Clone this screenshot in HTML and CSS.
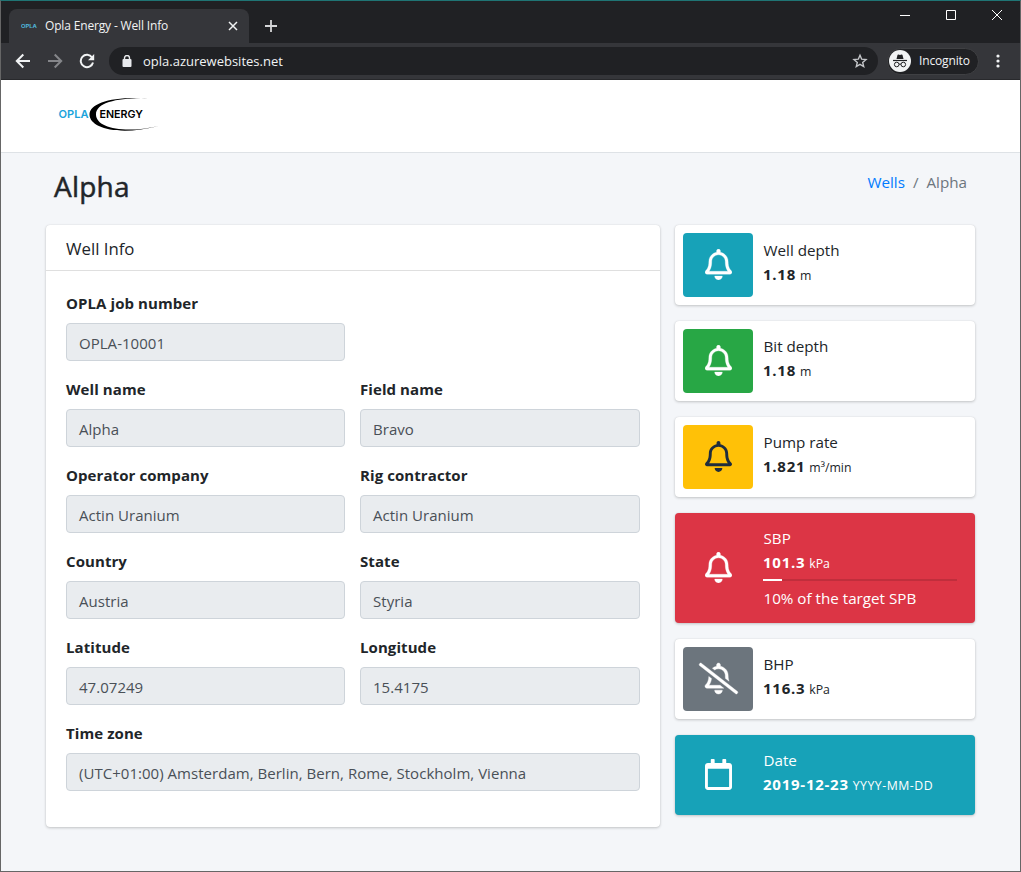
FILE: index.html
```
<!DOCTYPE html>
<html lang="en">
<head>
<meta charset="utf-8">
<title>Opla Energy - Well Info</title>
<link rel="stylesheet" href="styles.css">
</head>
<body>
<svg class="defs" aria-hidden="true">
  <symbol id="bell" viewBox="0 0 448 512"><path d="M439.39 362.29c-19.32-20.76-55.47-51.99-55.47-154.29 0-77.7-54.48-139.9-127.94-155.16V32c0-17.67-14.32-32-31.98-32s-31.98 14.33-31.98 32v20.84C118.56 68.1 64.08 130.3 64.08 208c0 102.3-36.15 133.53-55.47 154.29-6 6.45-8.66 14.16-8.61 21.71.11 16.4 12.98 32 32.1 32h383.8c19.12 0 32-15.6 32.1-32 .05-7.55-2.61-15.27-8.61-21.71zM67.53 368c21.22-27.97 44.42-74.33 44.53-159.42 0-.2-.06-.38-.06-.58 0-61.86 50.14-112 112-112s112 50.14 112 112c0 .2-.06.38-.06.58.11 85.1 23.31 131.46 44.53 159.42H67.53zM224 512c35.32 0 63.97-28.65 63.97-64H160.03c0 35.35 28.65 64 63.97 64z"/></symbol>
</svg>
<div class="window">
  <div class="tabstrip">
    <div class="tab">
      <svg class="favicon" width="17" height="6"><text x="0" y="5" textLength="16" lengthAdjust="spacingAndGlyphs">OPLA</text></svg>
      <span class="tab-title">Opla Energy - Well Info</span>
      <svg class="tab-close" width="10" height="10" viewBox="0 0 10 10"><path d="M1 1l8 8M9 1l-8 8"/></svg>
    </div>
    <svg class="new-tab" width="12" height="12" viewBox="0 0 12 12"><path d="M6 0v12M0 6h12"/></svg>
    <div class="caption">
      <svg width="10" height="10"><path d="M0 5.5h10"/></svg>
      <svg width="10" height="10"><path d="M.5 .5h9v9h-9z"/></svg>
      <svg width="10" height="10"><path d="M0 0l10 10M10 0L0 10"/></svg>
    </div>
  </div>
  <div class="toolbar">
    <svg class="nav" width="16" height="16" viewBox="0 0 16 16"><path d="M15 8H2.5M8.300 1.500L1.800 8l6.500 6.500"/></svg>
    <svg class="nav dim" width="16" height="16" viewBox="0 0 16 16"><path d="M1 8h12.500M7.700 1.500L14.200 8l-6.500 6.500"/></svg>
    <svg class="nav" width="16" height="16" viewBox="0 0 16 16"><path d="M13.100 4.500A6.200 6.200 0 1 0 14 9.500"/><path class="solid" d="M15.200 1v6.200H9z"/></svg>
    <div class="omnibox">
      <svg class="lock" width="10" height="13" viewBox="0 0 10 13"><rect x="0.500" y="4" width="9" height="8" rx="1"/><path d="M2.500 5V3a2.500 2.500 0 0 1 5 0v2"/></svg>
      <span class="url">opla.azurewebsites.net</span>
      <svg class="star" width="16" height="16" viewBox="0 0 16 16"><path d="M8 2.200l1.700 4 4.300.400-3.300 2.800 1 4.200L8 11.400l-3.700 2.200 1-4.200L2 6.600l4.300-.4z"/></svg>
    </div>
    <div class="incognito">
      <svg width="22" height="22" viewBox="0 0 22 22"><circle cx="11" cy="11" r="11" fill="#f1f3f4"/><path d="M7.500 9l1-4q.2-.7.900-.5L11 5l1.600-.5q.7-.2.900.5l1 4z" fill="#202124"/><path d="M4 10.500h14" stroke="#202124" stroke-width="1.200"/><g fill="none" stroke="#202124" stroke-width="1"><circle cx="7.700" cy="14.500" r="2.300"/><circle cx="14.300" cy="14.500" r="2.300"/><path d="M10 14.300q1-.7 2 0"/></g></svg>
      <span>Incognito</span>
    </div>
    <svg class="dots" width="4" height="14"><circle cx="2" cy="2" r="1.600"/><circle cx="2" cy="7" r="1.600"/><circle cx="2" cy="12" r="1.600"/></svg>
  </div>
  <header class="navbar">
    <svg class="logo" width="104" height="36" viewBox="0 0 104 36">
      <path d="M90 1.500C55-1 31.500 6 31.500 17.500C31.500 31 60 39.500 101 29C66 37 38 31 38 17.500C38 5 62 .500 90 1.500z"/>
      <text class="logo-opla" x="0.500" y="21.300" textLength="30" lengthAdjust="spacingAndGlyphs">OPLA</text>
      <text class="logo-energy" x="41.500" y="21.300" textLength="43.500" lengthAdjust="spacingAndGlyphs">ENERGY</text>
    </svg>
  </header>
  <div class="page-head">
    <h1>Alpha</h1>
    <nav class="crumbs"><a>Wells</a><i>/</i><span>Alpha</span></nav>
  </div>
  <main class="content">
    <section class="card">
      <h2>Well Info</h2>
      <div class="form">
        <div class="field first"><label>OPLA job number</label><div class="input">OPLA-10001</div></div>
        <div class="field"><label>Well name</label><div class="input">Alpha</div></div>
        <div class="field"><label>Field name</label><div class="input">Bravo</div></div>
        <div class="field"><label>Operator company</label><div class="input">Actin Uranium</div></div>
        <div class="field"><label>Rig contractor</label><div class="input">Actin Uranium</div></div>
        <div class="field"><label>Country</label><div class="input">Austria</div></div>
        <div class="field"><label>State</label><div class="input">Styria</div></div>
        <div class="field"><label>Latitude</label><div class="input">47.07249</div></div>
        <div class="field"><label>Longitude</label><div class="input">15.4175</div></div>
        <div class="field wide"><label>Time zone</label><div class="input">(UTC+01:00) Amsterdam, Berlin, Bern, Rome, Stockholm, Vienna</div></div>
      </div>
    </section>
    <aside class="boxes">
      <div class="box"><div class="icon teal"><svg class="bell"><use href="#bell"/></svg></div><div class="info"><span>Well depth</span><div><b>1.18</b> <small>m</small></div></div></div>
      <div class="box"><div class="icon green"><svg class="bell"><use href="#bell"/></svg></div><div class="info"><span>Bit depth</span><div><b>1.18</b> <small>m</small></div></div></div>
      <div class="box"><div class="icon yellow"><svg class="bell"><use href="#bell"/></svg></div><div class="info"><span>Pump rate</span><div><b>1.821</b> <small>m³/min</small></div></div></div>
      <div class="box tall red"><div class="icon"><svg class="bell"><use href="#bell"/></svg></div><div class="info"><span>SBP</span><div><b>101.3</b> <small>kPa</small></div><div class="progress"><div class="bar" style="width:10%"></div></div><span>10% of the target SPB</span></div></div>
      <div class="box"><div class="icon gray"><svg class="slash" viewBox="0 0 640 512"><path d="M633.99 471.02L36 3.51C29.1-2.01 19.03-.9 13.51 6l-10 12.49C-2.02 25.39-.9 35.46 6 40.98l598 467.51c6.9 5.52 16.96 4.400 22.49-2.490l10-12.490c5.520-6.900 4.410-16.970-2.500-22.490zM163.530 368c16.710-22.030 34.480-55.800 41.400-110.580l-45.470-35.550c-3.270 90.730-36.470 120.680-54.840 140.420-6 6.450-8.660 14.160-8.610 21.710.11 16.400 12.980 32 32.100 32h279.660l-61.400-48H163.530zM320 96c61.860 0 112 50.140 112 112 0 .2-.06.38-.06.58.02 16.840 1.160 31.770 2.790 45.730l59.530 46.540c-8.310-22.130-14.340-51.490-14.340-92.850 0-77.700-54.480-139.900-127.940-155.160V32c0-17.670-14.320-32-31.980-32s-31.980 14.330-31.980 32v20.840c-26.020 5.410-49.450 16.940-69.130 32.720l38.170 29.840C275 103.180 296.650 96 320 96zm0 416c35.320 0 63.970-28.650 63.970-64H256.030c0 35.350 28.650 64 63.970 64z"/></svg></div><div class="info"><span>BHP</span><div><b>116.3</b> <small>kPa</small></div></div></div>
      <div class="box date"><div class="icon"><svg class="calendar" viewBox="0 0 448 512"><path d="M400 64h-48V12c0-6.600-5.400-12-12-12h-40c-6.600 0-12 5.400-12 12v52H160V12c0-6.600-5.400-12-12-12h-40c-6.600 0-12 5.400-12 12v52H48C21.500 64 0 85.500 0 112v352c0 26.500 21.500 48 48 48h352c26.500 0 48-21.500 48-48V112c0-26.500-21.500-48-48-48zm-6 400H54c-3.300 0-6-2.700-6-6V160h352v298c0 3.300-2.700 6-6 6z"/></svg></div><div class="info"><span>Date</span><div><b>2019-12-23</b> <small class="fmt">YYYY-MM-DD</small></div></div></div>
    </aside>
  </main>
</div>
</body>
</html>
```
FILE: styles.css
```
* { box-sizing: border-box; }
body { margin: 0; font: 15px/24px "Open Sans", "Noto Sans", sans-serif; color: #212529; }
.defs { position: absolute; width: 0; height: 0; }
svg { display: block; flex: none; }
.window { width: 1021px; height: 872px; overflow: hidden; background: #f4f6f9; border: 1px solid #666; border-top-color: #1f7474; }

.tabstrip { display: flex; height: 42px; padding: 8px 0 0 8px; background: #202124; }
.tab { display: flex; align-items: center; width: 240px; height: 34px; padding: 0 11px 0 12px; background: #35363a; border-radius: 8px 8px 0 0; color: #f1f3f4; font-size: 12px; }
.favicon { margin-right: 7px; }
.favicon text { font: 700 5px Inter, sans-serif; fill: #4fb5d8; }
.tab-title { flex: 1; white-space: nowrap; letter-spacing: -.16px; }
.tab-close path { stroke: #f1f3f4; stroke-width: 1.5; }
.new-tab { margin: 11px 0 0 16px; }
.new-tab path { stroke: #d5d6d8; stroke-width: 1.8; }
.caption { display: flex; gap: 36px; margin: 1px 18px 0 auto; }
.caption path { fill: none; stroke: #fff; stroke-width: 1; }

.toolbar { display: flex; align-items: center; height: 37px; background: #35363a; border-bottom: 1px solid #28292c; padding-left: 14px; }
.nav { margin-right: 16px; fill: none; stroke: #f1f3f4; stroke-width: 2; }
.nav.dim { stroke: #85868a; }
.nav .solid { fill: #f1f3f4; stroke: none; }
.omnibox { display: flex; align-items: center; width: 769px; height: 28px; margin-left: -2px; padding: 0 10px 0 13px; border-radius: 14px; background: #202124; color: #f1f3f4; }
.lock { fill: #e8eaed; }
.lock path { fill: none; stroke: #e8eaed; stroke-width: 1.4; }
.url { flex: 1; margin-left: 11px; font-size: 13px; }
.star { fill: none; stroke: #c4c6c9; stroke-width: 1.4; }
.incognito { display: flex; align-items: center; gap: 8px; width: 92px; height: 27px; margin-left: 9px; padding-left: 1px; border: 1px solid #3f4043; border-radius: 14px; background: #202124; color: #f1f3f4; font-size: 12px; letter-spacing: -.15px; }
.dots { margin-left: 17px; fill: #f1f3f4; }

.navbar { height: 73px; padding: 17px 0 0 57px; background: #fff; border-bottom: 1px solid #dee2e6; }
.logo-opla { font: 600 11px Inter, sans-serif; fill: #1ba4dc; }
.logo-energy { font: 600 11px Inter, sans-serif; fill: #000; }

.page-head { display: flex; justify-content: space-between; height: 72px; padding: 17px 53px 0 53px; }
h1 { margin: 0; font-size: 28px; line-height: 33px; font-weight: 500; letter-spacing: .2px; -webkit-text-stroke: .5px #212529; }
.crumbs { display: flex; gap: 8px; color: #6c757d; font-size: 15.2px; }
.crumbs a { color: #007bff; }
.crumbs i { font-style: normal; }

.content { display: flex; gap: 15px; padding-left: 45px; align-items: flex-start; }
.card { width: 614px; height: 602px; background: #fff; border-radius: 4px; box-shadow: 0 0 1px rgba(0,0,0,.125), 0 1px 3px rgba(0,0,0,.2); }
h2 { height: 46px; margin: 0; padding: 12px 20px; border-bottom: 1px solid #dfdfdf; font-size: 16.8px; font-weight: 400; }
.form { display: grid; grid-template-columns: 279px 280px; column-gap: 15px; row-gap: 16px; padding: 20px; }
.first, .first + .field { grid-column: 1; }
.wide { grid-column: 1 / 3; }
label { display: block; height: 24px; margin-bottom: 8px; font-weight: 700; letter-spacing: .08px; }
.input { height: 38px; padding: 7px 12px; border: 1px solid #ced4da; border-radius: 4px; background: #e9ecef; color: #495057; white-space: nowrap; letter-spacing: .03px; }

.boxes { display: flex; flex-direction: column; gap: 16px; width: 300px; }
.box { display: flex; height: 80px; padding: 8px; background: #fff; border-radius: 4px; box-shadow: 0 0 1px rgba(0,0,0,.125), 0 1px 3px rgba(0,0,0,.2); }
.tall { height: 110px; }
.icon { display: flex; flex: none; width: 70px; padding: 0 0 1px 1px; align-items: center; justify-content: center; border-radius: 4px; fill: #fff; }
.bell { width: 27px; height: 31px; stroke: currentColor; stroke-width: 5; color: #fff; }
.calendar { width: 27px; height: 31px; }
.slash { width: 39px; height: 31px; stroke: #fff; stroke-width: 6; overflow: visible; }
.teal, .date { background: #17a2b8; }
.green { background: #28a745; }
.yellow { background: #ffc107; fill: #1f2d3d; }
.yellow .bell { color: #1f2d3d; stroke-width: 0; }
.gray { background: #6c757d; }
.red { background: #dc3545; }
.red, .date { color: #fff; }
.info { flex: 1; padding: 5px 10px 0; white-space: nowrap; }
.info > span { display: block; padding-left: .5px; font-size: 15.2px; }
.info b { letter-spacing: .75px; }
small { font-size: 12.3px; }
.fmt { letter-spacing: .5px; }
.progress { height: 2px; margin: 3px 0 5px; background: rgba(0,0,0,.125); }
.bar { height: 2px; background: #fff; }
```
